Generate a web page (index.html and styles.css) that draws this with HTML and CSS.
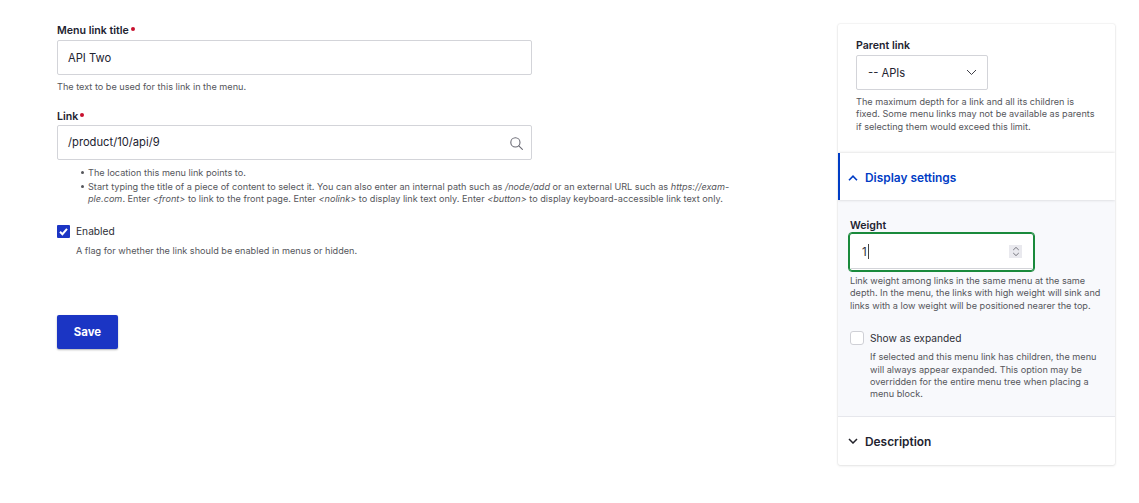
FILE: index.html
```html
<!DOCTYPE html>
<html lang="en">
<head>
<meta charset="utf-8">
<title>Edit menu link</title>
<link rel="stylesheet" href="styles.css">
</head>
<body>
<div class="page">
  <main class="main">
    <div class="item item-title">
      <div class="label">Menu link title<span class="req"></span></div>
      <div class="field">API Two</div>
      <div class="help">The text to be used for this link in the menu.</div>
    </div>
    <div class="item item-link">
      <div class="label">Link<span class="req"></span></div>
      <div class="field field-search">/product/10/api/9
        <svg class="search" width="13" height="13" viewBox="0 0 13 13" fill="none" stroke="#6b6b75" stroke-width="1.1"><circle cx="5.4" cy="5.4" r="4.6"/><path d="M8.8 8.8 L12.4 12.4" stroke-linecap="round"/></svg>
      </div>
      <ul class="help help-list">
        <li>The location this menu link points to.</li>
        <li>Start typing the title of a piece of content to select it. You can also enter an internal path such as <em>/node/add</em> or an external URL such as <em>https://exam-<br>ple.com</em>. Enter <em>&lt;front&gt;</em> to link to the front page. Enter <em>&lt;nolink&gt;</em> to display link text only. Enter <em>&lt;button&gt;</em> to display keyboard-accessible link text only.</li>
      </ul>
    </div>
    <div class="check-row check-enabled">
      <span class="box box-on"><svg width="13" height="13" viewBox="0 0 13 13" fill="none" stroke="#fff" stroke-width="2"><path d="M3 6.8 L5.4 9.2 L10 3.8"/></svg></span>
      <span class="check-label">Enabled</span>
    </div>
    <div class="help check-help">A flag for whether the link should be enabled in menus or hidden.</div>
    <div class="button">Save</div>
  </main>
  <aside class="card">
    <section class="parent">
      <div class="label">Parent link</div>
      <div class="select">-- APIs
        <svg class="select-arrow" width="11" height="7" viewBox="0 0 11 7" fill="none" stroke="#3f3f48" stroke-width="1"><path d="M1 1 L5.5 5.5 L10 1"/></svg>
      </div>
      <div class="help help-parent">The maximum depth for a link and all its children is fixed. Some menu links may not be available as parents if selecting them would exceed this limit.</div>
    </section>
    <div class="summary summary-open">
      <svg width="10" height="6" viewBox="0 0 10 6" fill="none" stroke="#003cc5" stroke-width="1.6"><path d="M1 5.2 L5 1.2 L9 5.2"/></svg>
      <span>Display settings</span>
    </div>
    <section class="panel">
      <div class="label label-weight">Weight</div>
      <div class="focus-ring">
        <div class="field-number"><span>1</span><i class="caret"></i>
          <span class="spin"><svg width="8" height="11" viewBox="0 0 8 11" fill="none" stroke="#77777f" stroke-width="1"><path d="M1.2 4 L4 1.4 L6.8 4 M1.2 7 L4 9.6 L6.8 7"/></svg></span>
        </div>
      </div>
      <div class="help help-weight">Link weight among links in the same menu at the same depth. In the menu, the links with high weight will sink and links with a low weight will be positioned nearer the top.</div>
      <div class="check-row check-expanded">
        <span class="box box-large"></span>
        <span class="check-label">Show as expanded</span>
      </div>
      <div class="help help-expanded">If selected and this menu link has children, the menu will always appear expanded. This option may be overridden for the entire menu tree when placing a menu block.</div>
    </section>
    <div class="summary summary-closed">
      <svg width="10" height="6" viewBox="0 0 10 6" fill="none" stroke="#22222a" stroke-width="1.5"><path d="M1 1 L5 5 L9 1"/></svg>
      <span>Description</span>
    </div>
  </aside>
</div>
</body>
</html>
```
FILE: styles.css
```css
* { box-sizing: border-box; }
html, body { margin: 0; padding: 0; background: #fff; }
body {
  font-family: Inter, "Liberation Sans", sans-serif;
  color: #222330;
  height: 503px;
  overflow: hidden;
}
.page {
  display: flex;
  align-items: flex-start;
  padding: 24px 24px 0 57px;
}
.main { width: 680px; margin-right: 101px; flex: none; }
.card {
  width: 277px;
  height: 441px;
  flex: none;
  background: #fff;
  border-radius: 2px;
  box-shadow: 0 0 2px rgba(0, 0, 0, .14), 0 1px 3px rgba(0, 0, 0, .08);
  overflow: hidden;
}
.label {
  font-size: 10.6px;
  font-weight: 600;
  line-height: 14px;
  color: #222330;
}
.req {
  display: inline-block;
  width: 4px;
  height: 4px;
  margin-left: 2px;
  vertical-align: 3px;
  border-radius: 50%;
  background: #c8102e;
}
.item-title .label { margin-bottom: 2px; }
.item-link { margin-top: 16.4px; }
.item-link .label { margin-bottom: 1.2px; }
.field {
  position: relative;
  width: 475px;
  height: 35px;
  padding-left: 10px;
  display: flex;
  align-items: center;
  font-size: 11.2px;
  color: #222330;
  border: 1px solid #d3d4d9;
  border-radius: 2px;
  background: #fff;
}
.search { position: absolute; right: 8px; top: 11px; }
.help {
  font-size: 9.15px;
  line-height: 12.4px;
  color: #55565b;
}
.item-title .help { margin-top: 6px; }
.help-list {
  margin: 6.6px 0 0;
  padding: 0 0 0 31px;
  list-style: none;
}
.help-list li { position: relative; margin-bottom: 2px; }
.help-list li::before {
  content: "";
  position: absolute;
  left: -7.5px;
  top: 4.5px;
  width: 3px;
  height: 3px;
  border-radius: 50%;
  background: #55565b;
}
.check-row {
  display: flex;
  align-items: center;
  gap: 6px;
  font-size: 10.2px;
  line-height: 14px;
}
.check-enabled { margin-top: 18.4px; }
.box {
  width: 13px;
  height: 13px;
  flex: none;
  border: 1px solid #cfd0d6;
  border-radius: 2px;
  background: #fff;
  display: block;
}
.box-large { width: 14px; height: 14px; border-radius: 3px; }
.box-on {
  border: 0;
  background: #1b35c4;
  border-radius: 1px;
}
.box-on svg { display: block; }
.check-label { color: #2d2e36; }
.check-help { margin-top: 7px; padding-left: 19px; }
.button {
  width: 61px;
  height: 34px;
  margin-top: 57.6px;
  display: flex;
  align-items: center;
  justify-content: center;
  font-size: 11.4px;
  font-weight: 700;
  color: #fff;
  background: #1b35c4;
  border-radius: 2px;
  box-shadow: 0 1px 2px rgba(0, 0, 0, .3);
}
.parent { height: 129px; padding: 15px 18px 0; }
.select {
  position: relative;
  width: 132px;
  height: 35px;
  margin-top: 2px;
  padding-left: 11px;
  display: flex;
  align-items: center;
  font-size: 11.2px;
  border: 1px solid #d3d4d9;
  border-radius: 2px;
}
.select-arrow { position: absolute; right: 10px; top: 13px; }
.help-parent { margin-top: 6px; }
.summary {
  display: flex;
  align-items: center;
  gap: 7px;
  padding-left: 10px;
  font-size: 11.9px;
  font-weight: 600;
}
.summary-open {
  height: 47px;
  padding-top: 2px;
  color: #003cc5;
  border-left: 2px solid #003cc5;
  padding-left: 8px;
  box-shadow: 0 0 3px rgba(0, 0, 0, .18);
  position: relative;
}
.summary-closed { height: 49px; color: #222330; border-top: 1px solid #e6e7ec; }
.panel {
  height: 216px;
  padding: 19px 12px 0 12px;
  background: #f8f9fc;
}
.label-weight { margin-bottom: -1px; }
.focus-ring {
  width: 187px;
  height: 40px;
  margin: 0 0 0 -2px;
  padding: 2px;
  border: 1px solid #1a8a3c;
  border-radius: 4px;
  background: #fff;
  box-shadow: inset 0 0 0 1px #1a8a3c;
}
.field-number {
  position: relative;
  height: 100%;
  padding-left: 11px;
  display: flex;
  align-items: center;
  font-size: 11.6px;
  color: #2d2e36;
  border-bottom: 1px solid #d3d4d9;
}
.caret { display: block; width: 1px; height: 15px; background: #444; margin-left: 1px; }
.spin {
  position: absolute;
  right: 10px;
  top: 10px;
  width: 13px;
  height: 13px;
  display: flex;
  align-items: center;
  justify-content: center;
  background: #e9e9ee;
}
.help-weight { margin-top: 3px; width: 258px; }
.check-expanded { margin-top: 19px; }
.help-expanded { margin-top: 6px; padding-left: 20px; width: 258px; }
```
